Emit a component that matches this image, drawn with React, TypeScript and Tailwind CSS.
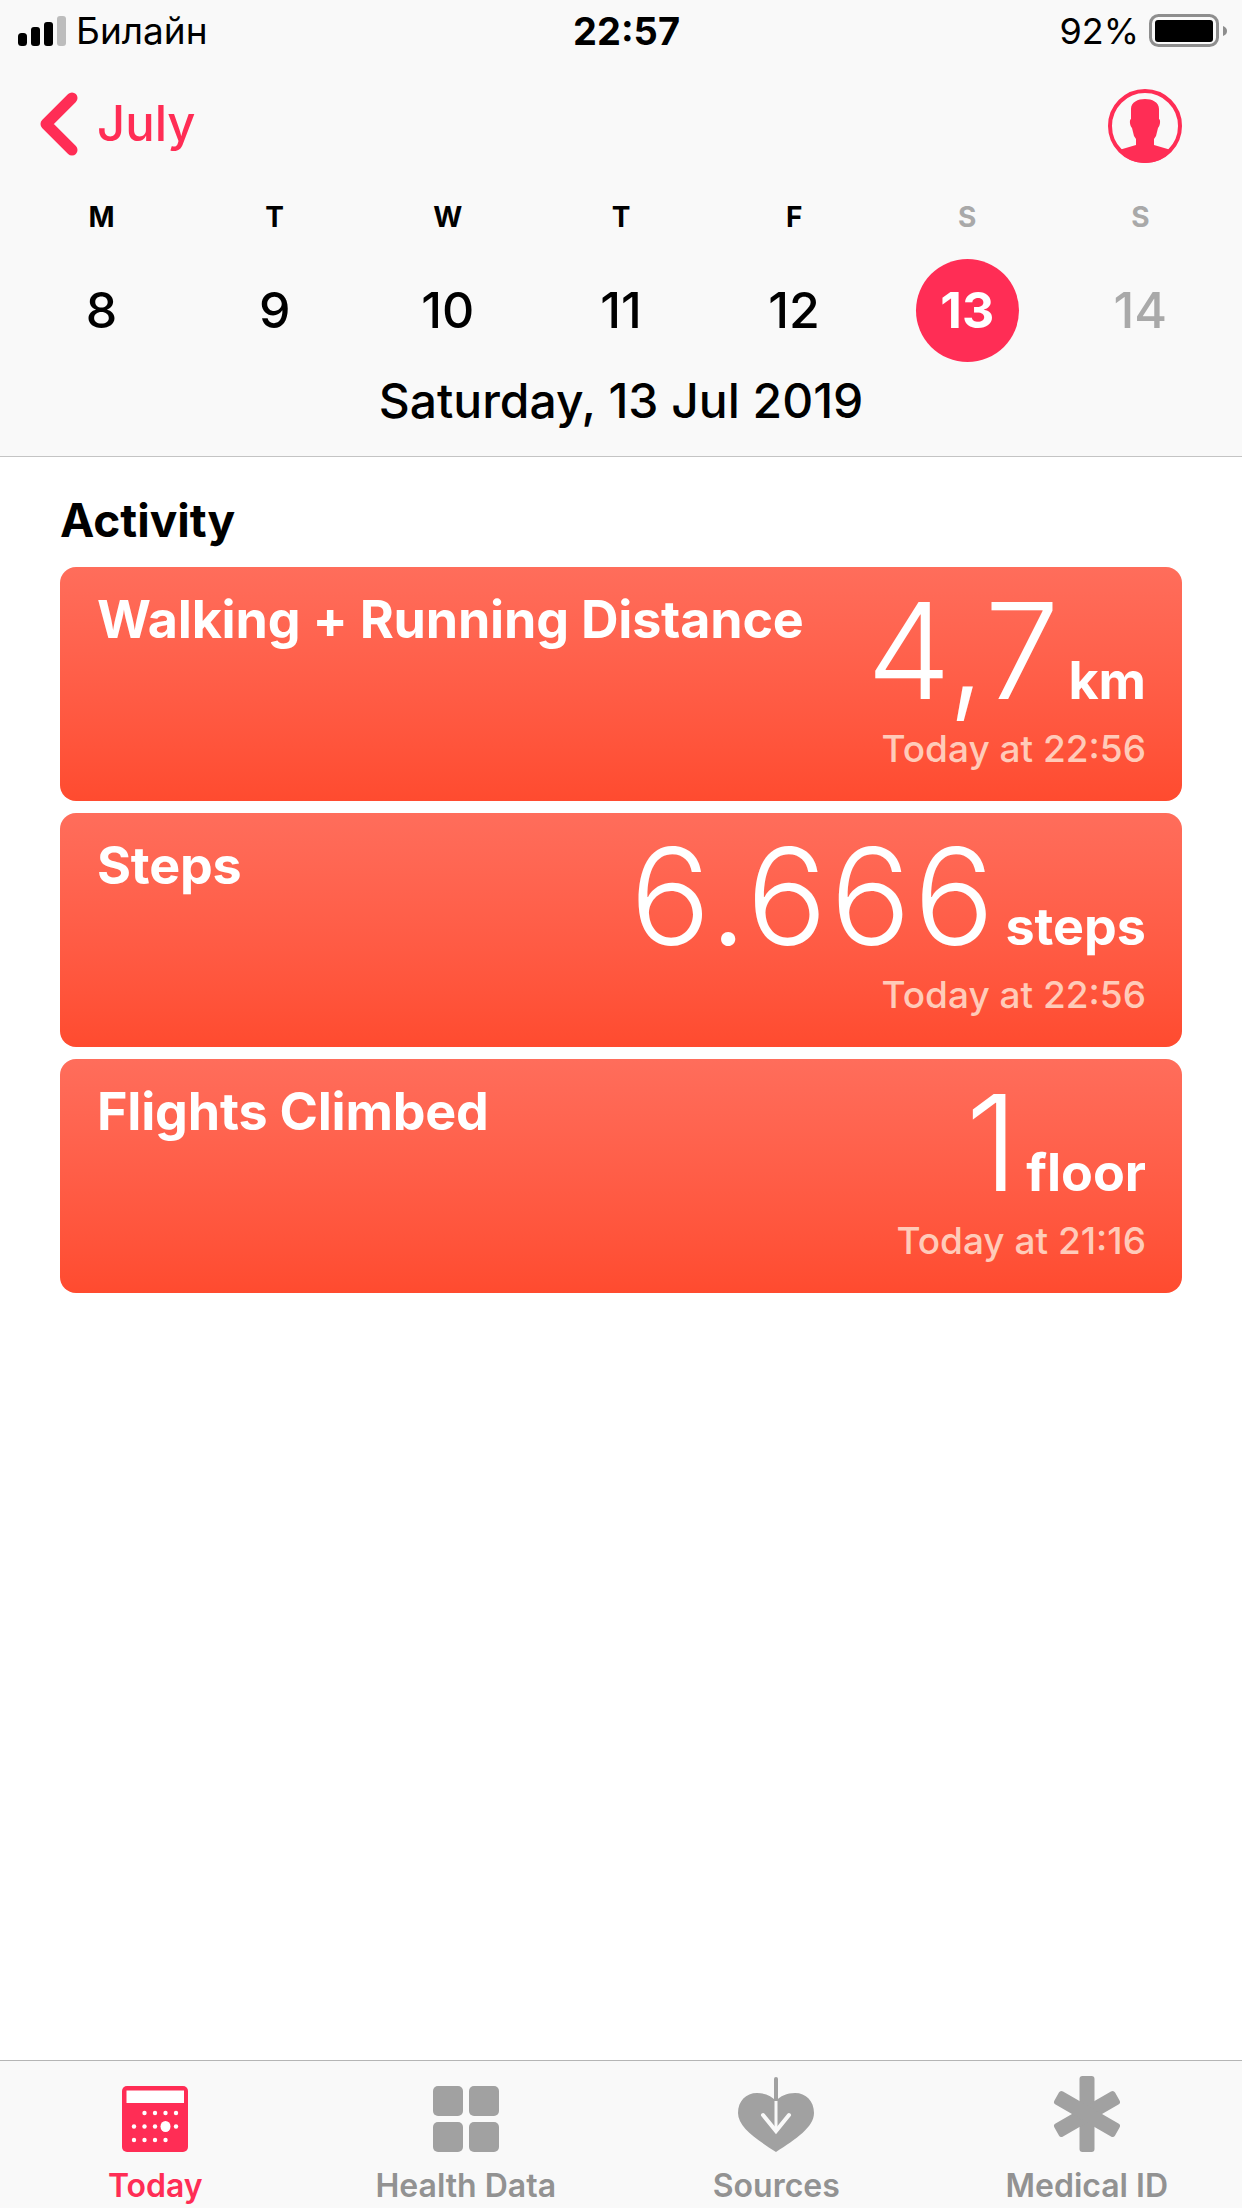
const DAYS = [
  { letter: 'M', day: '8' },
  { letter: 'T', day: '9' },
  { letter: 'W', day: '10' },
  { letter: 'T', day: '11' },
  { letter: 'F', day: '12' },
  { letter: 'S', day: '13', selected: true, weekend: true },
  { letter: 'S', day: '14', weekend: true },
];

const CARDS = [
  { title: 'Walking + Running Distance', value: '4,7', unit: 'km', time: 'Today at 22:56', spacing: 'tracking-[1px]' },
  { title: 'Steps', value: '6.666', unit: 'steps', time: 'Today at 22:56', spacing: 'tracking-[3px]' },
  { title: 'Flights Climbed', value: '1', unit: 'floor', time: 'Today at 21:16', spacing: 'tracking-[0px]' },
];

function SignalIcon() {
  return (
    <svg width="48" height="30" viewBox="0 0 48 30">
      <rect x="0" y="17" width="9" height="13" rx="3.5" fill="#000" />
      <rect x="13" y="11" width="9" height="19" rx="3" fill="#000" />
      <rect x="26" y="6" width="9" height="24" rx="3" fill="#000" />
      <rect x="39" y="0" width="9" height="30" rx="3" fill="#bdbdbd" />
    </svg>
  );
}

function BatteryIcon() {
  return (
    <svg width="78" height="34" viewBox="0 0 78 34">
      <rect x="1.5" y="1.5" width="67" height="30" rx="8" fill="none" stroke="#8e8e8e" strokeWidth="3" />
      <rect x="6" y="6" width="58" height="22" rx="3" fill="#000" />
      <path d="M74 12 C77 13 78 15 78 17 C78 19 77 21 74 22 Z" fill="#8e8e8e" />
    </svg>
  );
}

function ProfileIcon() {
  return (
    <svg width="74" height="74" viewBox="0 0 74 74">
      <circle cx="37" cy="37" r="35" fill="none" stroke="#ff2d55" strokeWidth="4" />
      <path
        d="M23 20 C23 13 30 10 37 10 C44 10 51 13 51 20 L51 30 C53 31 52 37 50 39 L48 47 L46 50 L46 56 L63 61 C57 70 47 74 37 74 C27 74 17 70 11 61 L28 56 L28 50 L26 47 L24 39 C22 37 21 31 23 30 Z"
        fill="#ff2d55"
      />
    </svg>
  );
}

function TodayIcon() {
  const rows = [
    { y: 27, xs: [22.5, 33, 43.5, 54] },
    { y: 40.5, xs: [12, 22.5, 33, 54] },
    { y: 54, xs: [12, 22.5, 33, 43.5] },
  ];
  return (
    <svg width="66" height="66" viewBox="0 0 66 66">
      <rect width="66" height="66" rx="5" fill="#ff2d55" />
      <rect x="4.5" y="4.5" width="57.5" height="12.5" fill="#fff" />
      {rows.map((row) =>
        row.xs.map((x) => <circle key={`${row.y}-${x}`} cx={x} cy={row.y} r="2.2" fill="#fff" />),
      )}
      <ellipse cx="43.5" cy="40.5" rx="5" ry="5.5" fill="#fff" />
    </svg>
  );
}

function GridIcon() {
  return (
    <svg width="66" height="66" viewBox="0 0 66 66" fill="#a1a1a1">
      <rect x="0" y="0" width="30" height="30" rx="5" />
      <rect x="36" y="0" width="30" height="30" rx="5" />
      <rect x="0" y="36" width="30" height="30" rx="5" />
      <rect x="36" y="36" width="30" height="30" rx="5" />
    </svg>
  );
}

function SourcesIcon() {
  return (
    <svg width="76" height="75" viewBox="0 0 76 75">
      <path
        d="M38 75 C18 62 0 50 0 36 C0 24 8 16 19 16 C27 16 34 19 38 24 C42 19 49 16 57 16 C68 16 76 24 76 36 C76 50 58 62 38 75 Z"
        fill="#a1a1a1"
      />
      <line x1="38" y1="2" x2="38" y2="24" stroke="#a1a1a1" strokeWidth="4" strokeLinecap="round" />
      <path d="M38 24 L38 52" stroke="#f9f9f9" strokeWidth="3" />
      <path d="M25 38 L38 54 L51 38" fill="none" stroke="#f9f9f9" strokeWidth="4" strokeLinecap="round" />
    </svg>
  );
}

function MedicalIcon() {
  return (
    <svg width="72" height="76" viewBox="0 0 72 76" fill="#a1a1a1">
      <rect x="28.5" y="0" width="15" height="76" rx="3" />
      <rect x="28.5" y="3" width="15" height="70" rx="3" transform="rotate(60 36 38)" />
      <rect x="28.5" y="3" width="15" height="70" rx="3" transform="rotate(-60 36 38)" />
    </svg>
  );
}

function MetricCard({ title, value, unit, time, spacing }: { title: string; value: string; unit: string; time: string; spacing: string }) {
  return (
    <div className="flex h-[234px] justify-between rounded-[16px] bg-gradient-to-b from-[#ff6d5b] to-[#ff4b2f] pl-[37px] pr-[36px] text-white">
      <div className="pt-[23px] text-[52px] leading-[60px] font-bold tracking-[-0.2px]">{title}</div>
      <div className="flex flex-col items-end">
        <div className="flex h-[150px] items-baseline gap-[8px] pt-[8px]">
          <span className={`text-[134px] leading-[150px] font-light ${spacing}`}>{value}</span>
          <span className="text-[52px] leading-[60px] font-bold">{unit}</span>
        </div>
        <div className="mt-[10px] text-[37px] leading-[44px] font-medium text-[#ffcbb9]">{time}</div>
      </div>
    </div>
  );
}

function TabItem({ label, active, children }: { label: string; active?: boolean; children: React.ReactNode }) {
  return (
    <div className="flex flex-col items-center">
      <div className="flex h-[92px] items-end pb-[1px]">{children}</div>
      <div className={`mt-[15px] text-[32px] leading-[36px] font-semibold ${active ? 'text-[#ff2d55]' : 'text-[#929292]'}`}>
        {label}
      </div>
    </div>
  );
}

export default function App() {
  return (
    <div className="flex h-[2208px] w-[1242px] flex-col overflow-hidden bg-white font-['Inter',sans-serif] text-black">
      <header className="h-[457px] border-b border-[#c4c4c4] bg-[#f9f9f9]">
        <div className="flex h-[62px] items-center pr-[15px] pl-[18px]">
          <div className="flex flex-1 items-center gap-[10px]">
            <SignalIcon />
            <span className="text-[37px] leading-[40px]">Билайн</span>
          </div>
          <div className="pl-[8px] text-[38px] leading-[40px] font-bold">22:57</div>
          <div className="flex flex-1 items-center justify-end gap-[10px]">
            <span className="text-[36px] leading-[40px]">92%</span>
            <BatteryIcon />
          </div>
        </div>

        <div className="flex h-[130px] items-start justify-between pr-[60px] pl-[40px]">
          <div className="flex items-center gap-[19px] pt-[30px]">
            <svg width="38" height="64" viewBox="0 0 38 64">
              <path d="M32 6 L6 32 L32 58" fill="none" stroke="#ff2d55" strokeWidth="11" strokeLinecap="round" strokeLinejoin="round" />
            </svg>
            <span className="text-[49px] leading-[60px] font-medium text-[#ff2d55]">July</span>
          </div>
          <div className="pt-[27px]">
            <ProfileIcon />
          </div>
        </div>

        <div className="grid grid-cols-7 px-[15px] pt-[7px]">
          {DAYS.map((d, i) => (
            <div key={i} className="flex flex-col items-center">
              <div className={`h-[36px] text-[28px] leading-[36px] font-bold ${d.weekend ? 'text-[#a9a9a9]' : 'text-black'}`}>
                {d.letter}
              </div>
              <div
                className={`mt-[24px] flex h-[103px] w-[103px] items-center justify-center rounded-full text-[50px] ${
                  d.selected ? 'bg-[#ff2d55] font-bold text-white' : d.weekend ? 'font-medium text-[#a9a9a9]' : 'font-medium text-black'
                }`}
              >
                {d.day}
              </div>
            </div>
          ))}
        </div>

        <div className="mt-[11px] text-center text-[48px] leading-[56px] font-medium">Saturday, 13 Jul 2019</div>
      </header>

      <main className="flex-1 px-[60px]">
        <h2 className="pt-[33px] pb-[17px] text-[46px] leading-[60px] font-bold">Activity</h2>
        <div className="flex flex-col gap-[12px]">
          {CARDS.map((c) => (
            <MetricCard key={c.title} {...c} />
          ))}
        </div>
      </main>

      <nav className="grid h-[148px] grid-cols-4 border-t border-[#b5b5b5] bg-[#f9f9f9]">
        <TabItem label="Today" active>
          <TodayIcon />
        </TabItem>
        <TabItem label="Health Data">
          <GridIcon />
        </TabItem>
        <TabItem label="Sources">
          <SourcesIcon />
        </TabItem>
        <TabItem label="Medical ID">
          <MedicalIcon />
        </TabItem>
      </nav>
    </div>
  );
}
